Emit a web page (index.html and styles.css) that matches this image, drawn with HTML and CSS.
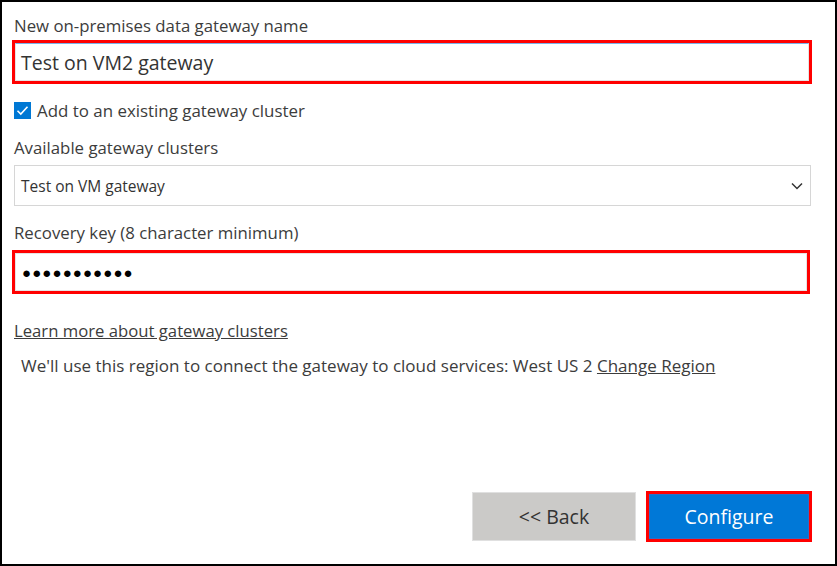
FILE: index.html
```html
<!DOCTYPE html>
<html>
<head>
<meta charset="utf-8">
<link rel="stylesheet" href="styles.css">
</head>
<body>
<div class="frame">
  <div class="label l1">New on-premises data gateway name</div>
  <div class="hl hl-name"><div class="field focus">Test on VM2 gateway</div></div>
  <div class="check-row">
    <span class="check"><svg width="17" height="17" viewBox="0 0 17 17"><path d="M3.5 8.8 L6.8 12 L13.5 4.8" fill="none" stroke="#fff" stroke-width="1.6"/></svg></span>
    <span class="check-text">Add to an existing gateway cluster</span>
  </div>
  <div class="label l2">Available gateway clusters</div>
  <div class="select">
    <span>Test on VM gateway</span>
    <svg class="chev" width="12" height="8" viewBox="0 0 12 8"><path d="M1 1.5 L6 6.5 L11 1.5" fill="none" stroke="#333" stroke-width="1.5"/></svg>
  </div>
  <div class="label l3">Recovery key (8 character minimum)</div>
  <div class="hl hl-key"><div class="field pw">●●●●●●●●●●●</div></div>
  <div class="link-row"><a class="link">Learn more about gateway clusters</a></div>
  <div class="region">We'll use this region to connect the gateway to cloud services: West US 2 <a class="link">Change Region</a></div>
  <div class="buttons">
    <div class="btn back">&lt;&lt; Back</div>
    <div class="hl-btn"><div class="btn configure">Configure</div></div>
  </div>
</div>
</body>
</html>
```
FILE: styles.css
```css
* { box-sizing: border-box; }
html, body { margin: 0; padding: 0; background: #fff; }
body { font-family: "Open Sans", "Noto Sans", sans-serif; color: #3c3c3c; }
.frame {
  width: 837px; height: 566px;
  border: 2px solid #000;
  padding: 14px 23px 22px 12px;
  display: flex; flex-direction: column;
}
.label { font-size: 16.8px; line-height: 20px; height: 20px; white-space: nowrap; }
.hl { border: 3px solid #f00; margin-left: -2px; }
.hl-name { margin-top: 4px; height: 44px; }
.field { height: 100%; border: 1px solid #e4e4e4; padding-left: 5px; display: flex; align-items: center; }
.focus { border-top-color: #7ab3ea; font-size: 19.5px; color: #333; }
.check-row { display: flex; align-items: center; margin-top: 16px; height: 20px; }
.check { width: 17px; height: 17px; background: #0078d4; display: inline-block; margin-right: 6px; }
.check svg { display: block; }
.check-text { font-size: 16.9px; }
.l2 { margin-top: 18px; }
.select {
  margin-top: 7px; margin-right: 1px; height: 41px;
  border: 1px solid #d6d6d6; display: flex; align-items: center; justify-content: space-between;
  padding: 0 7px 0 6px; font-size: 15.5px; color: #333;
}
.chev { display: block; }
.l3 { margin-top: 17px; }
.hl-key { margin-top: 7px; height: 44px; margin-right: 2px; }
.pw { font-size: 15px; letter-spacing: 1.1px; color: #000; padding-left: 6px; }
.link-row { margin-top: 27px; height: 20px; line-height: 20px; font-size: 16.7px; white-space: nowrap; }
.link { text-decoration: underline; color: #3c3c3c; }
.region { margin-top: 15px; height: 20px; line-height: 20px; padding-left: 7px; font-size: 17px; white-space: nowrap; }
.buttons { margin-top: auto; display: flex; justify-content: flex-end; align-items: center; gap: 10px; }
.btn { display: flex; align-items: center; justify-content: center; font-size: 19.5px; }
.back { width: 164px; height: 49px; background: #cbcac8; color: #333; border: 1px solid #e0e0e0; }
.hl-btn { border: 3px solid #f00; width: 166px; height: 51px; }
.configure { height: 100%; background: #0078d7; color: #fff; border: 1px solid #2a6fc9; }
```
